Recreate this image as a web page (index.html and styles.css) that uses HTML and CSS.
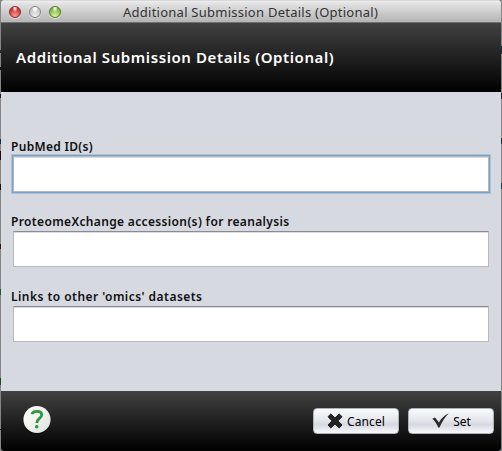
FILE: index.html
```html
<!DOCTYPE html>
<html lang="en">
<head>
<meta charset="utf-8">
<title>Additional Submission Details (Optional)</title>
<link rel="stylesheet" href="styles.css">
</head>
<body>
<div class="window">
  <div class="titlebar">
    <div class="lights"><i class="light red"></i><i class="light gray"></i><i class="light green"></i></div>
    <span class="title">Additional Submission Details (Optional)</span>
  </div>
  <header class="header"><h1>Additional Submission Details (Optional)</h1></header>
  <main class="body">
    <div class="field"><label for="pubmed"><span class="l1">PubMed ID(s)</span></label><input id="pubmed" class="focused" type="text"></div>
    <div class="field"><label for="px"><span class="l2">ProteomeXchange accession(s) for reanalysis</span></label><input id="px" type="text"></div>
    <div class="field"><label for="omics"><span class="l3">Links to other 'omics' datasets</span></label><input id="omics" type="text"></div>
  </main>
  <footer class="footer">
    <svg class="help" width="30" height="30" viewBox="0 0 30 30">
      <defs><linearGradient id="disc" x1="0" y1="0" x2="1" y2="1"><stop offset="0" stop-color="#fff"/><stop offset=".5" stop-color="#f1f1ed"/><stop offset="1" stop-color="#dededa"/></linearGradient></defs>
      <circle cx="15" cy="15.5" r="14" fill="#000" opacity=".25"/>
      <circle cx="15" cy="14.5" r="13.6" fill="url(#disc)"/>
      <path d="M10 9.3C10.8 5.3 19.6 5.2 19.7 9.8C19.7 13.4 14.8 13.5 14.8 18" fill="none" stroke="#2b9a44" stroke-width="2.8"/>
      <circle cx="14.7" cy="21.7" r="1.8" fill="#2b9a44"/>
    </svg>
    <div class="actions">
      <button class="cancel"><svg width="16" height="16" viewBox="0 0 16 16"><path d="M3.8 1L8 4.9L12.2 1L15 3.7L11 7.9L15 12L12.2 15L8 11L3.8 15L1 12L5 7.9L1 3.7Z" fill="#222" stroke="#222" stroke-width="1" stroke-linejoin="round"/></svg><span>Cancel</span></button>
      <button class="set"><svg width="17" height="16" viewBox="0 0 17 16"><path d="M.3 5.8L3 4.5L7 9.4C9.2 5.6 12.2 2.3 16.7.3C12.7 4.5 9.7 9.4 7.5 14.4H6.2C4.6 10.8 2.9 8 .3 5.8Z" fill="#2b2b2b"/></svg><span>Set</span></button>
    </div>
  </footer>
</div>
</body>
</html>
```
FILE: styles.css
```css
* { box-sizing: border-box; }
html, body { margin: 0; height: 100%; overflow: hidden; }
body {
  font-family: "Noto Sans", "Open Sans", sans-serif;
  background:
    linear-gradient(#1c2a38, #1c2a38) 0 50px / 1px 3px no-repeat,
    linear-gradient(#16162a, #16162a) 0 67px / 1px 3px no-repeat,
    linear-gradient(#3a1010, #3a1010) 0 94px / 1px 4px no-repeat,
    linear-gradient(#1c2a48, #1c2a48) 0 139px / 1px 5px no-repeat,
    linear-gradient(#2a0808, #2a0808) 0 151px / 1px 9px no-repeat,
    linear-gradient(#200a1c, #200a1c) 0 184px / 1px 6px no-repeat,
    linear-gradient(#401008, #401008) 0 244px / 1px 5px no-repeat,
    linear-gradient(#1d5a38, #1d5a38) 0 289px / 1px 6px no-repeat,
    linear-gradient(#1e4a10, #1e4a10) 0 378px / 1px 7px no-repeat,
    linear-gradient(#111, #111) 0 429px / 1px 1px no-repeat,
    linear-gradient(#1d3b50, #1d3b50) 501px 46px / 1px 8px no-repeat,
    linear-gradient(#222, #222) 501px 93px / 1px 6px no-repeat,
    linear-gradient(#1d3040, #1d3040) 501px 138px / 1px 6px no-repeat,
    linear-gradient(#1d3b50, #1d3b50) 501px 183px / 1px 6px no-repeat,
    #858587;
  padding: 0 1px;
}
.window {
  height: 451px;
  display: flex;
  flex-direction: column;
  border-radius: 4px 4px 3px 3px;
  overflow: hidden;
  background: #d6d9e0;
}
.titlebar {
  height: 23px;
  flex: none;
  display: grid;
  grid-template-columns: 114px 1fr;
  align-items: center;
  background: linear-gradient(#c4c4c4 0, #ededed 1px, #dedede 5px, #b7b7b7 21px);
  border-bottom: 1px solid #707070;
}
.lights { display: flex; gap: 8px; padding: 1px 0 0 8px; }
.light {
  width: 12px;
  height: 12px;
  border-radius: 50%;
  border: 1px solid #777;
  box-shadow: 0 1px 0 rgba(255,255,255,.5);
}
.red { background: radial-gradient(ellipse at 50% 10%, #fff 0, #ef9a98 20%, transparent 35%), radial-gradient(circle at 50% 90%, #ff9c94, #d4423f 60%, #a92726); border-color: #852c2b; }
.gray { background: radial-gradient(ellipse at 50% 10%, #fff 0, #eee 25%, transparent 40%), radial-gradient(circle at 50% 90%, #eee, #c6c6c6 70%); border-color: #858585; }
.green { background: radial-gradient(ellipse at 50% 10%, #fff 0, #c8e3a4 20%, transparent 35%), radial-gradient(circle at 50% 90%, #d8f79a, #8dc34f 60%, #5b9130); border-color: #52782f; }
.title { color: #333; font-size: 13px; line-height: 18px; letter-spacing: .25px; padding: 2px 0 0 8px; white-space: nowrap; }
.header {
  height: 69px;
  flex: none;
  display: flex;
  align-items: center;
  padding: 0 0 2px 15px;
  background: linear-gradient(#414141, #000);
}
h1 { margin: 0; color: #fff; font-size: 15px; font-weight: 600; line-height: 20px; white-space: nowrap; letter-spacing: .6px; }
.body { height: 299px; flex: none; padding: 45px 12px 0; display: flex; flex-direction: column; gap: 20px; }
.field { height: 55px; display: flex; flex-direction: column; }
label { height: 19px; flex: none; font-size: 12px; font-weight: 600; line-height: 18px; color: #101010; margin-left: -2px; padding-top: 1px; white-space: nowrap; }
.l1 { letter-spacing: .3px; }
.l2 { letter-spacing: .35px; }
.l3 { letter-spacing: .46px; }
input {
  height: 36px;
  width: 476px;
  padding: 0 6px;
  border: 1px solid #b9b9b9;
  border-top-color: #898b90;
  border-radius: 0;
  background: #fff;
  box-shadow: inset 0 1px 0 #dcdcdc;
  outline: 0;
  font: 13px "Noto Sans", sans-serif;
}
.focused { border-color: #b9b5b0; box-shadow: 0 0 0 1px #73a4d1, 0 0 0 2px #a9c2dc, inset 0 1px 0 #dcdcdc; }
.footer {
  height: 60px;
  flex: none;
  display: flex;
  justify-content: space-between;
  padding: 14px 7px 0 21px;
  background: linear-gradient(#414141, #000);
}
.actions { display: flex; gap: 9px; padding-top: 3px; }
button {
  width: 86px;
  height: 26px;
  display: flex;
  align-items: center;
  justify-content: center;
  gap: 4px;
  padding: 0;
  border: 1px solid #aeb3ba;
  border-radius: 4px;
  background: linear-gradient(#fafbfc, #e5e7ec 45%, #d6d9e0 65%, #f8f9fd 100%);
  font: 12px/18px "Noto Sans", sans-serif;
  color: #000;
}
button span { padding-top: 2px; }
.cancel span { letter-spacing: .1px; }
.set { padding-left: 1px; }
```
